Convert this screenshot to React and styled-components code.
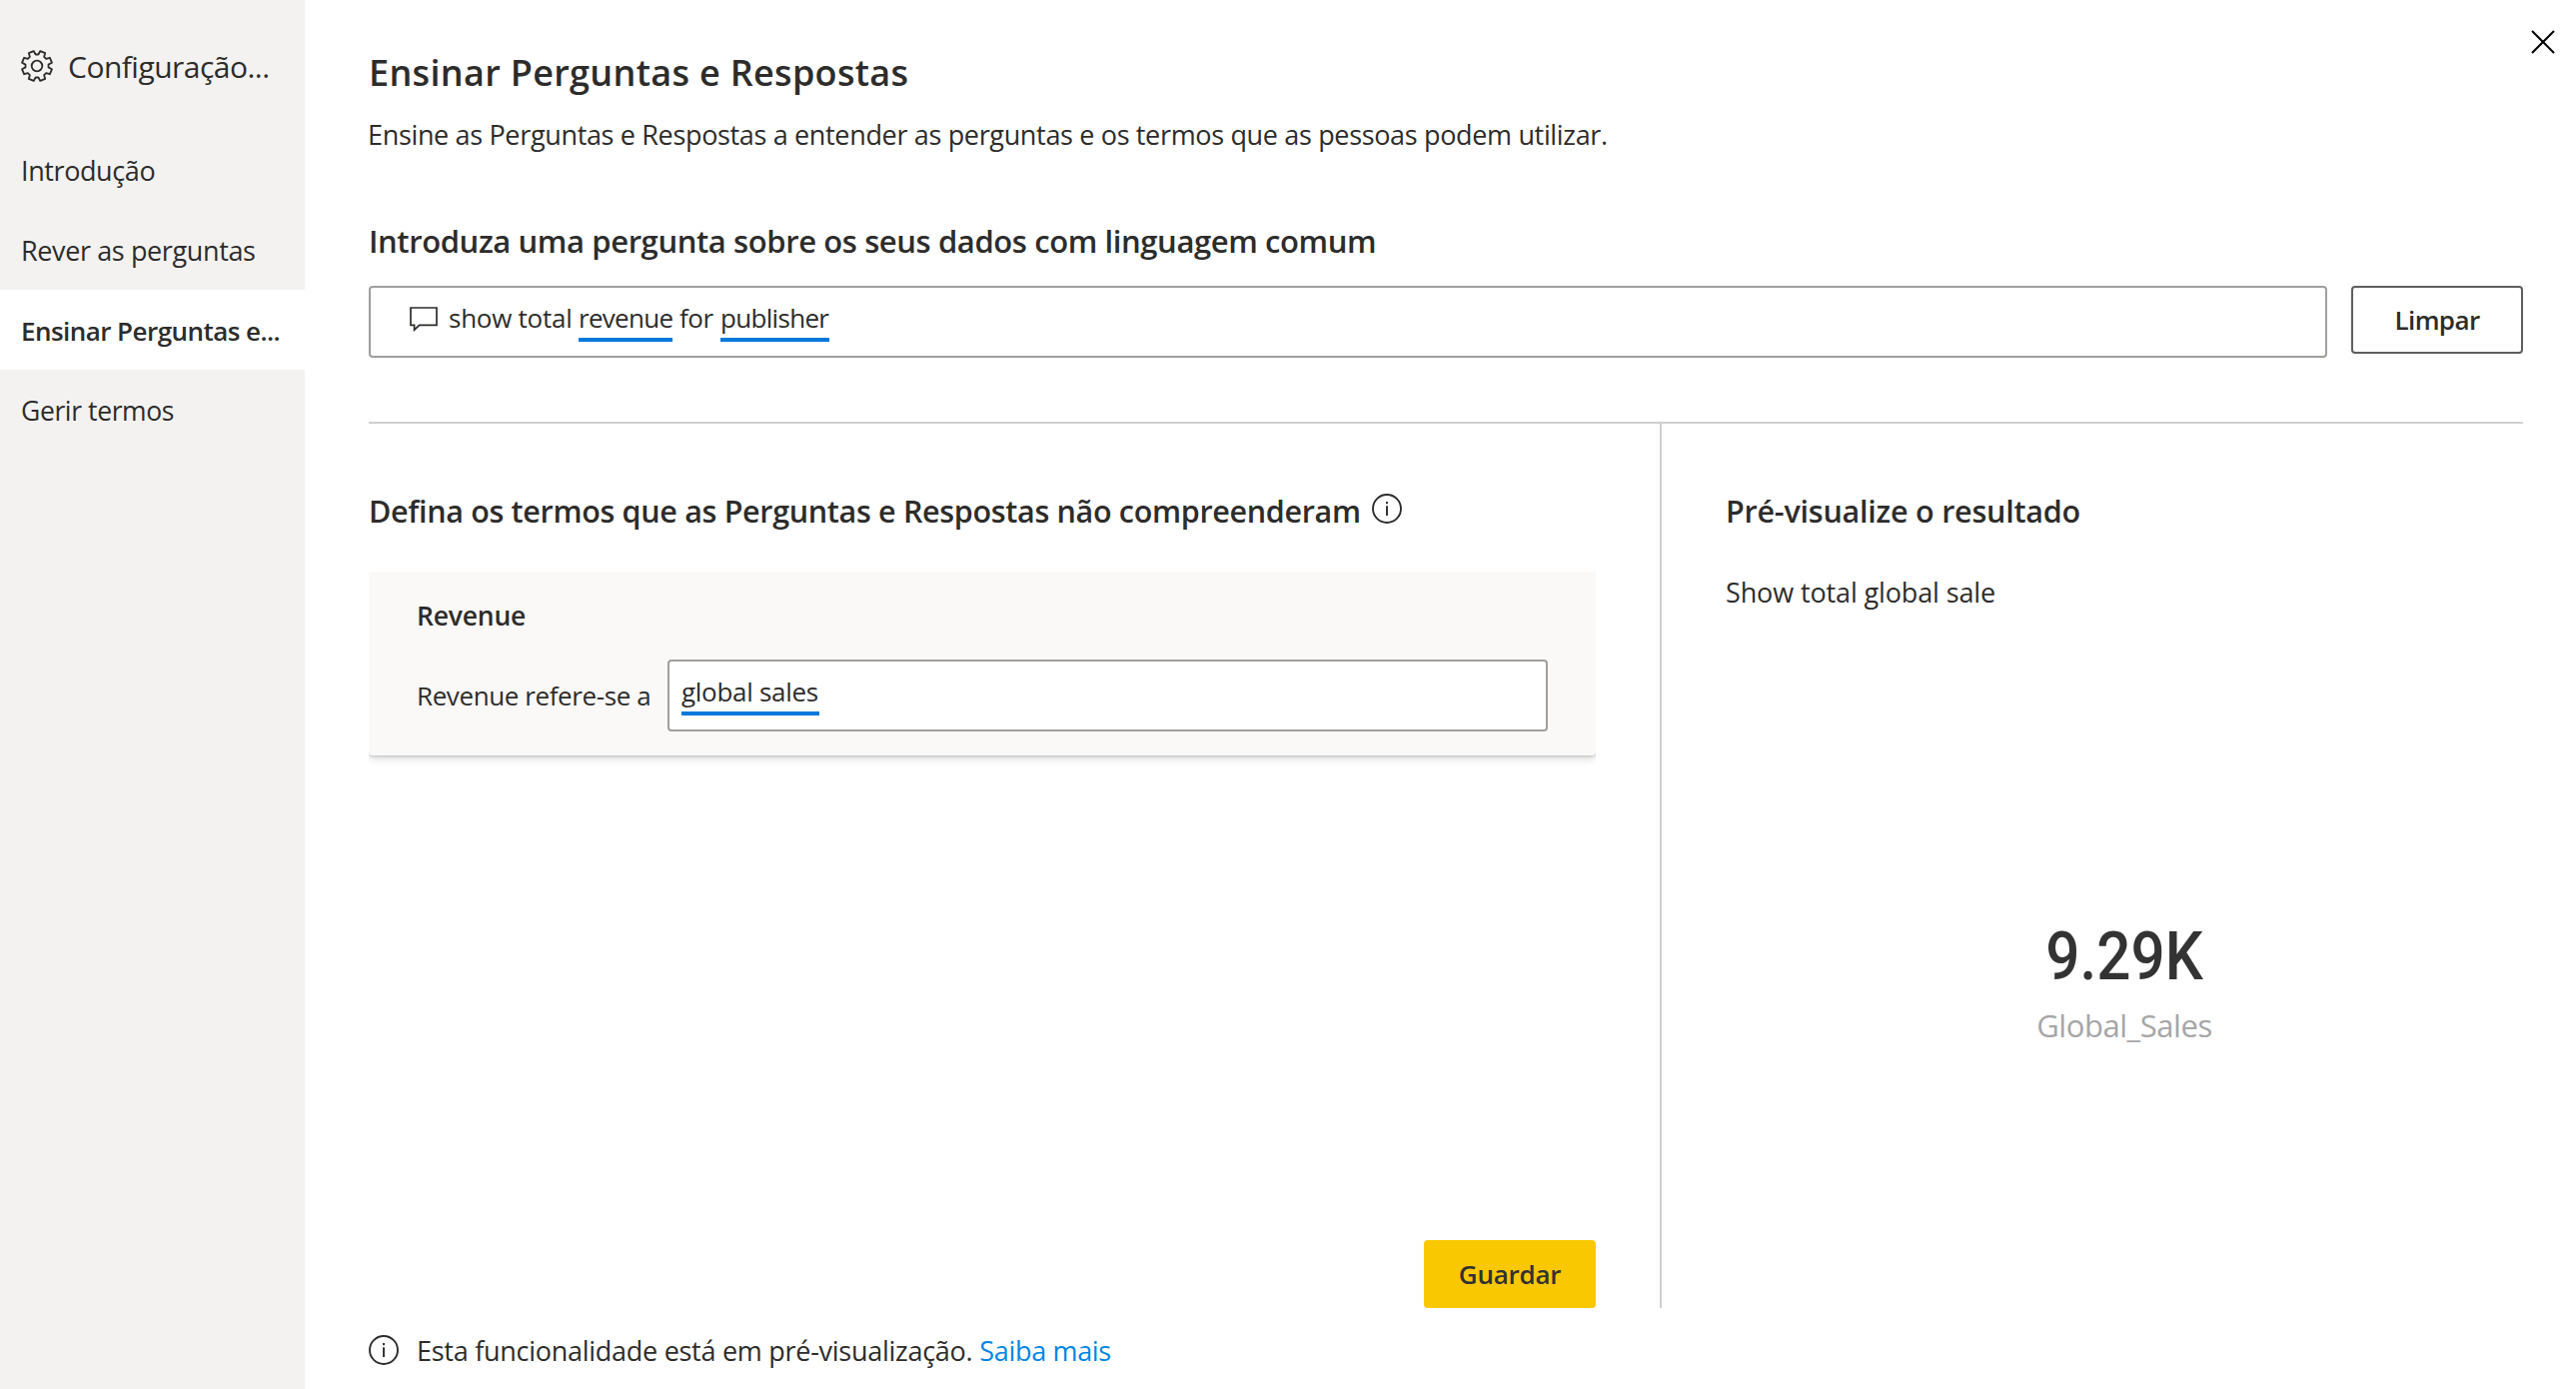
import React from 'react';
import styled, { createGlobalStyle } from 'styled-components';

const GlobalStyle = createGlobalStyle`
  *, *::before, *::after { box-sizing: border-box; }
  body {
    margin: 0;
    background: #fff;
    color: #2d2c2b;
    font-family: "Open Sans", "Noto Sans", sans-serif;
    font-size: 27px;
    line-height: 36px;
  }
  svg { display: block; flex: none; }
`;

const Dialog = styled.div`
  position: relative;
  display: flex;
  height: 1390px;
  overflow: hidden;
`;

const Sidebar = styled.aside`
  flex: none;
  width: 305px;
  background: #f3f2f1;
`;

const SidebarHeader = styled.div`
  display: flex;
  align-items: center;
  gap: 14px;
  height: 130px;
  padding: 0 0 0 20px;

  svg { margin-top: 2px; }
`;

const SidebarTitle = styled.div`
  font-size: 30px;
  line-height: 40px;
  letter-spacing: -0.52px;
  white-space: nowrap;
  padding-top: 4px;
`;

const NavItem = styled.a`
  display: flex;
  align-items: center;
  height: 80px;
  padding: 1px 0 0 21px;
  white-space: nowrap;
  background: ${(p) => (p.$active ? '#fff' : 'transparent')};
  font-weight: ${(p) => (p.$active ? 600 : 400)};
  font-size: ${(p) => p.$size}px;
  letter-spacing: ${(p) => p.$spacing}px;
`;

const Main = styled.main`
  flex: 1;
  display: flex;
  flex-direction: column;
  padding: 49px 53px 0 64px;
`;

const Title = styled.h1`
  margin: 0 0 20px;
  font-size: 36px;
  font-weight: 600;
  line-height: 48px;
  letter-spacing: 0.316px;
`;

const Subtitle = styled.p`
  margin: 0 0 67px -1px;
  letter-spacing: -0.34px;
`;

const Heading = styled.h2`
  display: flex;
  align-items: center;
  margin: 0;
  font-size: ${(p) => p.$size}px;
  font-weight: 600;
  line-height: 42px;
  letter-spacing: ${(p) => p.$spacing}px;
  white-space: nowrap;
`;

const QuestionRow = styled.div`
  display: flex;
  align-items: flex-start;
  gap: 24px;
  margin-top: 24px;
`;

const Field = styled.div`
  flex: 1;
  display: flex;
  align-items: flex-start;
  height: 72px;
  padding: 12px 0 0 ${(p) => p.$indent}px;
  border: 2px solid #a19f9d;
  border-radius: 4px;
  background: #fff;
  font-size: 26px;
  white-space: nowrap;

  svg { margin: 7px 11px 0 0; }
`;

const Word = styled.span`
  flex: none;
  width: ${(p) => p.$width}px;
  padding-left: ${(p) => p.$shift || 0}px;
  letter-spacing: ${(p) => p.$spacing}px;
`;

const Term = styled(Word)`
  padding-bottom: 2px;
  border-bottom: 4px solid #0078dc;
`;

const Button = styled.button`
  flex: none;
  width: 172px;
  height: 68px;
  padding: 0;
  border: ${(p) => (p.$primary ? '0' : '2px solid #605e5c')};
  border-radius: 4px;
  background: ${(p) => (p.$primary ? '#fac800' : '#fff')};
  color: ${(p) => (p.$primary ? '#323130' : '#2d2c2b')};
  font: 600 26px/36px "Open Sans", "Noto Sans", sans-serif;
  letter-spacing: ${(p) => p.$spacing}px;
`;

const Columns = styled.div`
  display: flex;
  height: 887px;
  margin-top: 64px;
  border-top: 2px solid #d0d0d0;
`;

const TermsColumn = styled.section`
  flex: none;
  display: flex;
  flex-direction: column;
  width: 1294px;
  padding: 66px 64px 0 0;
  border-right: 2px solid #d0d0d0;

  h2 svg { margin: -4px 0 0 11px; }
  button { margin: auto 0 0 auto; }
`;

const Card = styled.div`
  height: 184px;
  margin-top: 40px;
  padding: 26px 48px 0;
  border-radius: 0 0 4px 4px;
  background: #faf9f8;
  box-shadow: 0 1px 3px rgba(0, 0, 0, 0.18), 0 4px 9px rgba(0, 0, 0, 0.12);
  clip-path: inset(0 0 -16px 0);
`;

const CardTitle = styled.div`
  margin: 0 0 26px;
  font-size: 26.5px;
  font-weight: 600;
  letter-spacing: -0.2px;
`;

const CardRow = styled.div`
  display: flex;
  align-items: center;
`;

const FieldLabel = styled.label`
  width: 251px;
  font-size: 26px;
  letter-spacing: -0.4px;
  white-space: nowrap;
`;

const PreviewColumn = styled.section`
  flex: 1;
  padding: 66px 0 0 64px;
`;

const PreviewText = styled.p`
  margin: 43px 0 307px;
  letter-spacing: -0.125px;
`;

const CardVisual = styled.div`
  text-align: center;
`;

const Metric = styled.div`
  color: #333;
  font: 500 66px/80px Roboto, sans-serif;
  transform: scaleX(0.912);
`;

const MetricLabel = styled.div`
  margin-top: 7px;
  color: #a6a6a6;
  font-size: 31px;
  line-height: 42px;
  letter-spacing: -0.43px;
`;

const Footer = styled.footer`
  display: flex;
  align-items: center;
  margin-top: 25px;
  letter-spacing: -0.274px;
  white-space: nowrap;

  svg { margin: -2px 18px 0 0; }
`;

const Link = styled.a`
  margin-left: 7px;
  color: #0086e4;
  letter-spacing: -0.33px;
`;

const CloseButton = styled.button`
  position: absolute;
  top: 30px;
  right: 21px;
  padding: 0;
  border: 0;
  background: none;
`;

const gearPath = (() => {
  const point = (r, deg) => {
    const a = (deg * Math.PI) / 180;
    return `${(17 + r * Math.cos(a)).toFixed(2)} ${(17 + r * Math.sin(a)).toFixed(2)}`;
  };
  const pts = [];
  for (let k = 0; k < 8; k += 1) {
    const base = k * 45;
    pts.push(point(11.6, base - 7), point(11.6, base + 7), point(15.3, base + 12.5), point(15.3, base + 32.5));
  }
  return `M${pts.join('L')}Z`;
})();

const GearIcon = () => (
  <svg width="34" height="34" viewBox="0 0 34 34" fill="none" stroke="#2d2c2b" strokeWidth="1.8" strokeLinejoin="round">
    <path d={gearPath} />
    <circle cx="17" cy="17" r="5.3" />
  </svg>
);

const InfoIcon = () => (
  <svg width="30" height="30" viewBox="0 0 30 30" fill="none" stroke="#2d2c2b" strokeWidth="1.9">
    <circle cx="15" cy="15" r="14" />
    <path d="M15 12.3V22M15 8v2.2" />
  </svg>
);

const ChatIcon = () => (
  <svg width="28" height="25" viewBox="0 0 28 25" fill="none" stroke="#2d2c2b" strokeWidth="1.7">
    <path d="M1 1H27V18.4H9.6L4.6 23.2V18.4H1Z" />
  </svg>
);

const CloseIcon = () => (
  <svg width="24" height="24" viewBox="0 0 24 24" fill="none" stroke="#000" strokeWidth="2">
    <path d="M1 1L23 23M23 1L1 23" />
  </svg>
);

const navItems = [
  { label: 'Introdução', size: 27, spacing: -0.4 },
  { label: 'Rever as perguntas', size: 27, spacing: -0.384 },
  { label: 'Ensinar Perguntas e...', size: 26, spacing: -0.55, active: true },
  { label: 'Gerir termos', size: 26.5, spacing: -0.38 },
];

export default function App() {
  return (
    <Dialog>
      <GlobalStyle />
      <Sidebar>
        <SidebarHeader>
          <GearIcon />
          <SidebarTitle>Configuração...</SidebarTitle>
        </SidebarHeader>
        <nav>
          {navItems.map((item) => (
            <NavItem key={item.label} $active={item.active} $size={item.size} $spacing={item.spacing}>
              {item.label}
            </NavItem>
          ))}
        </nav>
      </Sidebar>

      <Main>
        <Title>Ensinar Perguntas e Respostas</Title>
        <Subtitle>
          Ensine as Perguntas e Respostas a entender as perguntas e os termos que as pessoas podem utilizar.
        </Subtitle>

        <Heading $size={31} $spacing={-0.4}>
          Introduza uma pergunta sobre os seus dados com linguagem comum
        </Heading>
        <QuestionRow>
          <Field $indent={39}>
            <ChatIcon />
            <Word $width={130} $spacing={-0.26}>show total</Word>
            <Term $width={94} $spacing={-0.7}>revenue</Term>
            <Word $width={48} $shift={7} $spacing={-0.5}>for</Word>
            <Term $width={109} $spacing={-0.69}>publisher</Term>
          </Field>
          <Button $spacing={-0.6}>Limpar</Button>
        </QuestionRow>

        <Columns>
          <TermsColumn>
            <Heading $size={30.5} $spacing={-0.325}>
              Defina os termos que as Perguntas e Respostas não compreenderam
              <InfoIcon />
            </Heading>
            <Card>
              <CardTitle>Revenue</CardTitle>
              <CardRow>
                <FieldLabel>Revenue refere-se a</FieldLabel>
                <Field $indent={12}>
                  <Term $width={138} $spacing={-0.29}>global sales</Term>
                </Field>
              </CardRow>
            </Card>
            <Button $primary $spacing={-0.25}>Guardar</Button>
          </TermsColumn>
          <PreviewColumn>
            <Heading $size={30.5} $spacing={-0.22}>Pré-visualize o resultado</Heading>
            <PreviewText>Show total global sale</PreviewText>
            <CardVisual>
              <Metric>9.29K</Metric>
              <MetricLabel>Global_Sales</MetricLabel>
            </CardVisual>
          </PreviewColumn>
        </Columns>

        <Footer>
          <InfoIcon />
          <span>Esta funcionalidade está em pré-visualização.</span>
          <Link>Saiba mais</Link>
        </Footer>
      </Main>

      <CloseButton aria-label="Fechar">
        <CloseIcon />
      </CloseButton>
    </Dialog>
  );
}
